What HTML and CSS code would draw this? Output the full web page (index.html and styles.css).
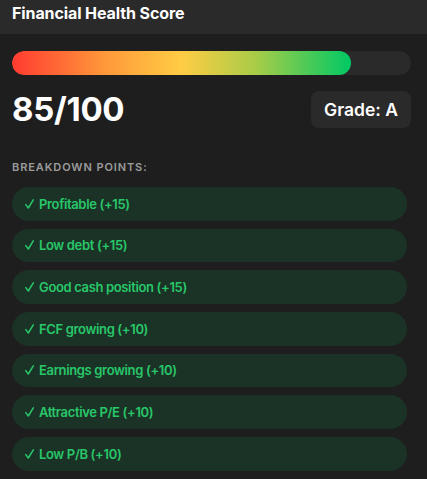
FILE: index.html
```html
<!DOCTYPE html>
<html lang="en">
<head>
<meta charset="utf-8">
<title>Financial Health Score</title>
<link rel="stylesheet" href="styles.css">
</head>
<body>
<div class="panel">
  <header class="panel-header">Financial Health Score</header>
  <section class="panel-body">
    <div class="track"><div class="fill" style="width:85%"></div></div>
    <div class="score-row">
      <div class="score">85/100</div>
      <div class="grade">Grade: A</div>
    </div>
    <div class="section-label">BREAKDOWN POINTS:</div>
    <ul class="points">
      <li class="point"><svg class="check" viewBox="0 0 9 10"><path d="M0.8 5.6 L3.3 9 L8.3 0.8"/></svg>Profitable (+15)</li>
      <li class="point"><svg class="check" viewBox="0 0 9 10"><path d="M0.8 5.6 L3.3 9 L8.3 0.8"/></svg>Low debt (+15)</li>
      <li class="point"><svg class="check" viewBox="0 0 9 10"><path d="M0.8 5.6 L3.3 9 L8.3 0.8"/></svg>Good cash position (+15)</li>
      <li class="point"><svg class="check" viewBox="0 0 9 10"><path d="M0.8 5.6 L3.3 9 L8.3 0.8"/></svg>FCF growing (+10)</li>
      <li class="point"><svg class="check" viewBox="0 0 9 10"><path d="M0.8 5.6 L3.3 9 L8.3 0.8"/></svg>Earnings growing (+10)</li>
      <li class="point"><svg class="check" viewBox="0 0 9 10"><path d="M0.8 5.6 L3.3 9 L8.3 0.8"/></svg>Attractive P/E (+10)</li>
      <li class="point"><svg class="check" viewBox="0 0 9 10"><path d="M0.8 5.6 L3.3 9 L8.3 0.8"/></svg>Low P/B (+10)</li>
    </ul>
  </section>
</div>
</body>
</html>
```

FILE: styles.css
```css
* { box-sizing: border-box; }
html, body { margin: 0; padding: 0; }
body {
  background: #1e1e1e;
  font-family: Inter, "Liberation Sans", sans-serif;
  color: #fff;
  width: 427px;
  height: 479px;
  overflow: hidden;
}
.panel-header {
  background: #2a2a2a;
  height: 34px;
  padding: 4px 12px 0;
  font-size: 16px;
  font-weight: 700;
  line-height: 19px;
  letter-spacing: -0.1px;
}
.panel-body {
  padding: 17px 16px 0 12px;
}
.track {
  height: 24px;
  border-radius: 12px;
  background: #2a2a2a;
  overflow: hidden;
}
.fill {
  height: 100%;
  border-radius: 12px;
  background: linear-gradient(90deg, #ff3b30 0%, #ff9a3a 28%, #ffcc44 50%, #a8cc48 72%, #00c864 100%);
}
.score-row {
  display: flex;
  justify-content: space-between;
  align-items: center;
  margin-top: 16px;
}
.score {
  font-size: 33px;
  font-weight: 700;
  line-height: 37px;
  letter-spacing: -0.3px;
}
.grade {
  background: #2a2a2a;
  border-radius: 8px;
  height: 37px;
  padding: 0 13px;
  display: flex;
  align-items: center;
  font-size: 17.5px;
  font-weight: 600;
}
.section-label {
  margin-top: 32px;
  font-size: 11px;
  font-weight: 600;
  letter-spacing: 0.9px;
  color: #9b9b9b;
  line-height: 14px;
}
.points {
  list-style: none;
  margin: 13px 4px 0 0;
  padding: 0;
  display: flex;
  flex-direction: column;
  gap: 8px;
}
.point {
  background: #1b3326;
  border-radius: 17px;
  height: 33.67px;
  padding: 0 13px;
  display: flex;
  align-items: center;
  gap: 5px;
  font-size: 13px;
  font-weight: 600;
  letter-spacing: -0.35px;
  color: #28c76a;
}
.check {
  width: 9px;
  height: 10px;
  flex: none;
  fill: none;
  stroke: currentColor;
  stroke-width: 1.5;
  stroke-linecap: round;
  stroke-linejoin: round;
}
```
